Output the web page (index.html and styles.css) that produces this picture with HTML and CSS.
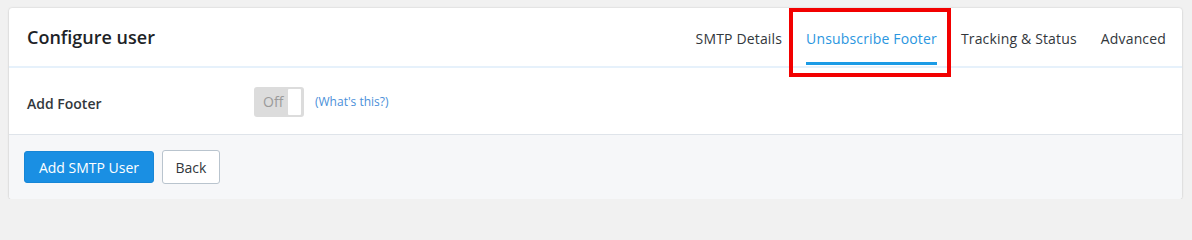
FILE: index.html
```html
<!DOCTYPE html>
<html>
<head>
<meta charset="utf-8">
<link rel="stylesheet" href="styles.css">
</head>
<body>
<div class="card">
  <div class="card-header">
    <h1 class="title">Configure user</h1>
    <nav class="tabs">
      <a class="tab">SMTP Details</a>
      <a class="tab active">Unsubscribe Footer<span class="highlight"></span></a>
      <a class="tab">Tracking &amp; Status</a>
      <a class="tab">Advanced</a>
    </nav>
  </div>
  <div class="card-body">
    <div class="field-label">Add Footer</div>
    <div class="toggle"><span class="toggle-text">Off</span><span class="knob"></span></div>
    <a class="help">(What's this?)</a>
  </div>
  <div class="card-footer">
    <button class="btn btn-primary">Add SMTP User</button>
    <button class="btn btn-default">Back</button>
  </div>
</div>
</body>
</html>
```

FILE: styles.css
```css
html, body { margin: 0; padding: 0; }
body {
  background: #f1f1f1;
  font-family: "Open Sans", "Noto Sans", sans-serif;
  padding: 8px 10px 0 9px;
}
.card {
  background: #fff;
  border-radius: 3px;
  box-shadow: 0 0 2px rgba(0,0,0,0.18), 0 1px 2px rgba(0,0,0,0.08);
  width: 1173px;
}
.card-header {
  height: 58px;
  display: flex;
  align-items: stretch;
  justify-content: space-between;
  border-bottom: 2px solid #e6f1fb;
  padding-left: 18px;
  padding-right: 4px;
}
.title {
  margin: 0;
  font-size: 18px;
  font-weight: 600;
  color: #1d2327;
  align-self: center;
  line-height: 24px;
  padding-bottom: 1px;
}
.tabs {
  display: flex;
  align-items: stretch;
}
.tab {
  margin: 0 12px;
  font-size: 14px;
  letter-spacing: 0.16px;
  color: #32373c;
  display: flex;
  align-items: center;
  padding-top: 6px;
  box-sizing: border-box;
  border-bottom: 3px solid transparent;
  height: 57px;
  position: relative;
}
.tab.active {
  color: #2a96e0;
  border-bottom-color: #1a9be6;
}
.highlight {
  position: absolute;
  left: -17px;
  right: -14px;
  top: 0;
  height: 69px;
  box-sizing: border-box;
  border: 4px solid #f20000;
}
.card-body {
  height: 66px;
  display: flex;
  align-items: center;
  padding-left: 18px;
  border-bottom: 1px solid #dfe4ea;
}
.field-label {
  width: 227px;
  font-size: 14px;
  font-weight: 600;
  color: #32373c;
  padding-top: 5px;
}
.toggle {
  width: 50px;
  height: 30px;
  background: #dcdcdc;
  border-radius: 3px;
  display: flex;
  align-items: center;
  justify-content: space-between;
  box-sizing: border-box;
  padding: 2px 3px 2px 9px;
  margin-top: 1px;
}
.toggle-text {
  font-size: 14px;
  color: #9a9a9a;
}
.knob {
  width: 13px;
  height: 26px;
  background: #fff;
  border-radius: 1px;
}
.help {
  font-size: 12px;
  color: #4a90d9;
  margin-left: 11px;
}
.card-footer {
  background: #f6f7f9;
  height: 64px;
  display: flex;
  align-items: center;
  padding-left: 15px;
  gap: 8px;
  border-radius: 0 0 3px 3px;
}
.btn {
  font-family: "Open Sans", "Noto Sans", sans-serif;
  font-size: 14px;
  border-radius: 3px;
  cursor: pointer;
  box-sizing: border-box;
}
.btn-primary {
  width: 130px;
  height: 32px;
  background: #1a8fe3;
  color: #fff;
  border: 1px solid #1786d6;
}
.btn-default {
  width: 58px;
  height: 34px;
  background: #fff;
  color: #32373c;
  border: 1px solid #b9c4ce;
}
```
